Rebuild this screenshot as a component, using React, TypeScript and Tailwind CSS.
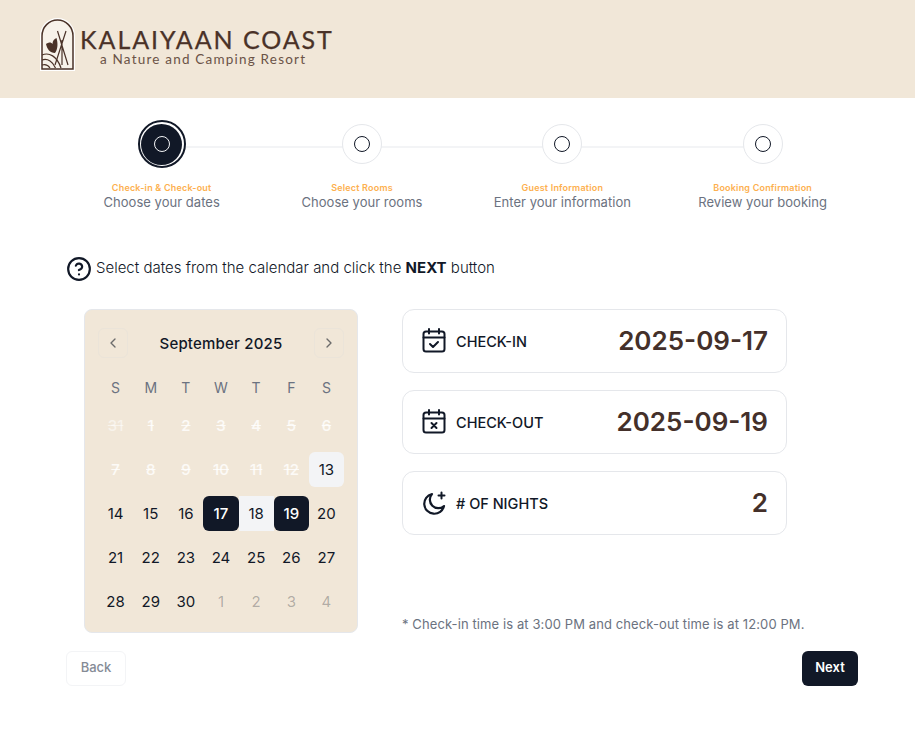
import { ChevronLeft, ChevronRight, CircleHelp } from 'lucide-react';

const steps = [
   { title: 'Check-in & Check-out', sub: 'Choose your dates', active: true },
   { title: 'Select Rooms', sub: 'Choose your rooms', active: false },
   { title: 'Guest Information', sub: 'Enter your information', active: false },
   { title: 'Booking Confirmation', sub: 'Review your booking', active: false },
];

const weekDays = ['S', 'M', 'T', 'W', 'T', 'F', 'S'];

function Logo() {
   return (
      <div className="flex items-start">
         <svg width="35" height="53" viewBox="0 0 35 53" fill="none" className="shrink-0">
            <path d="M0 53V18C0 8 7.5 0 17.5 0S35 8 35 18V53Z" fill="#ffffff" />
            <path d="M2 51V18C2 9 9 2 17.5 2S33 9 33 18V51Z" stroke="#4a3228" strokeWidth="1.5" fill="#f7f2ea" />
            <path d="M17.5 13L28 47M26 13L15 47M22 22V47" stroke="#4a3228" strokeWidth="1.2" />
            <path d="M2 37C9 34 17 38 21 50M2 42C8 40 13 44 15.5 50M2 47C5 46 8 47 10 50" stroke="#4a3228" strokeWidth="1.2" />
            <path d="M6 26C9 24 11 24 12.5 26C12.5 23 14 21 16.5 20C18 25 18 31 15 35C10 35 7 31 6 26Z" fill="#4a3228" />
         </svg>
         <div className="ml-[5px] pt-[10px] font-['Lato',sans-serif] text-[#4a3228]">
            <div className="text-[25px] leading-[22px] tracking-[1.95px] whitespace-nowrap [-webkit-text-stroke:0.25px_#4a3228]">KALAIYAAN COAST</div>
            <div className="mt-[2px] ml-[20px] text-[13.5px] leading-[14px] tracking-[1.2px] whitespace-nowrap text-[#6b5347]">a Nature and Camping Resort</div>
         </div>
      </div>
   );
}

function Step({ title, sub, active }: { title: string; sub: string; active: boolean }) {
   return (
      <div className="relative z-10 flex w-[200.33px] flex-col items-center">
         <div className="flex h-12 items-center justify-center">
            {active ? (
               <div className="flex h-12 w-12 items-center justify-center rounded-full border-[2.5px] border-[#111827] bg-white p-[1.5px]">
                  <div className="flex h-full w-full items-center justify-center rounded-full bg-[#111827]">
                     <div className="h-4 w-4 rounded-full border-[1.75px] border-[#f3f4f6]" />
                  </div>
               </div>
            ) : (
               <div className="flex h-10 w-10 items-center justify-center rounded-full border border-[#e5e7eb] bg-white">
                  <div className="h-4 w-4 rounded-full border-[1.75px] border-[#111827]" />
               </div>
            )}
         </div>
         <p className="mt-[15px] text-[9px] leading-[10px] font-semibold tracking-[0.2px] text-[#fdb04f]">{title}</p>
         <p className="text-[13px] leading-[18px] tracking-[0.03px] text-[#6b7280]">{sub}</p>
      </div>
   );
}

function Day({ label, kind }: { label: number; kind: string }) {
   const base = 'flex h-[35px] items-center justify-center pt-px text-[15px]';
   if (kind === 'disabled') {
      return <div className={`${base} font-medium text-white/80 line-through`}>{label}</div>;
   }
   if (kind === 'disabledFaint') {
      return <div className={`${base} font-medium text-white/50 line-through`}>{label}</div>;
   }
   if (kind === 'faint') {
      return <div className={`${base} text-[#111827]/30`}>{label}</div>;
   }
   if (kind === 'today') {
      return <div className={`${base} rounded-md bg-[#f3f4f6] text-[#111827]`}>{label}</div>;
   }
   if (kind === 'selected') {
      return <div className={`${base} rounded-md bg-[#111827] font-medium text-white`}>{label}</div>;
   }
   if (kind === 'range') {
      return <div className={`${base} bg-[#f3f4f6] text-[#111827]`}>{label}</div>;
   }
   return <div className={`${base} text-[#111827]`}>{label}</div>;
}

const dayRows: { label: number; kind: string }[][] = [
   [31, 1, 2, 3, 4, 5, 6].map((d) => ({ label: d, kind: d === 31 ? 'disabledFaint' : 'disabled' })),
   [7, 8, 9, 10, 11, 12].map((d) => ({ label: d, kind: 'disabled' })).concat({ label: 13, kind: 'today' }),
   [
      { label: 14, kind: 'day' },
      { label: 15, kind: 'day' },
      { label: 16, kind: 'day' },
      { label: 17, kind: 'selected' },
      { label: 18, kind: 'range' },
      { label: 19, kind: 'selected' },
      { label: 20, kind: 'day' },
   ],
   [21, 22, 23, 24, 25, 26, 27].map((d) => ({ label: d, kind: 'day' })),
   [
      { label: 28, kind: 'day' },
      { label: 29, kind: 'day' },
      { label: 30, kind: 'day' },
      { label: 1, kind: 'faint' },
      { label: 2, kind: 'faint' },
      { label: 3, kind: 'faint' },
      { label: 4, kind: 'faint' },
   ],
];

function Calendar() {
   return (
      <div className="w-[274px] rounded-lg border border-[#e5e7eb] bg-[#f1e7d8] px-[13px] pt-[18px] pb-[13px]">
         <div className="flex items-center justify-between">
            <div className="flex h-[30px] w-[30px] items-center justify-center rounded-md border border-[#ebe4d9] text-[#6b6b6b]">
               <ChevronLeft size={16} />
            </div>
            <div className="pt-[2px] text-[15px] font-medium tracking-[0.2px] text-[#111827]">September 2025</div>
            <div className="flex h-[30px] w-[30px] items-center justify-center rounded-md border border-[#ebe4d9] text-[#6b6b6b]">
               <ChevronRight size={16} />
            </div>
         </div>
         <div className="mt-[20px] grid grid-cols-7 text-center text-sm leading-[20px] text-[#6b7280]">
            {weekDays.map((d, i) => (
               <div key={i}>{d}</div>
            ))}
         </div>
         {dayRows.map((row, i) => (
            <div key={i} className={`grid grid-cols-7 ${i === 0 ? 'mt-[10px]' : 'mt-[9px]'}`}>
               {row.map((d) => (
                  <Day key={d.label + d.kind} label={d.label} kind={d.kind} />
               ))}
            </div>
         ))}
      </div>
   );
}

function CalCheckIcon() {
   return (
      <svg width="24" height="25" viewBox="0 0 24 25" fill="none" stroke="#111827" strokeWidth="2" strokeLinecap="round" strokeLinejoin="round">
         <rect x="1.5" y="3.5" width="21" height="20" rx="2.5" />
         <path d="M1.5 9.5H22.5M7 1V5.5M17 1V5.5M8 16L11 19L16 14" />
      </svg>
   );
}

function CalXIcon() {
   return (
      <svg width="24" height="25" viewBox="0 0 24 25" fill="none" stroke="#111827" strokeWidth="2" strokeLinecap="round" strokeLinejoin="round">
         <rect x="1.5" y="3.5" width="21" height="20" rx="2.5" />
         <path d="M1.5 9.5H22.5M7 1V5.5M17 1V5.5M9.5 14L14.5 19M14.5 14L9.5 19" />
      </svg>
   );
}

function MoonIcon() {
   return (
      <svg width="24" height="24" viewBox="0 0 24 24" fill="none" stroke="#111827" strokeWidth="2.2" strokeLinecap="round" strokeLinejoin="round">
         <path d="M10 3A10 10 0 1 0 22 15A8.5 8.5 0 0 1 10 3Z" />
         <path d="M19.5 1.5V7.5M16.5 4.5H22.5" strokeWidth="2" />
      </svg>
   );
}

function InfoCard({ icon, label, value }: { icon: React.ReactNode; label: string; value: string }) {
   return (
      <div className="flex h-[63.5px] items-center justify-between rounded-xl border border-[#e5e7eb] pr-[18px] pl-[19px]">
         <div className="flex items-center gap-[10px]">
            {icon}
            <span className="pt-[2px] text-[14.5px] font-medium text-[#111827]">{label}</span>
         </div>
         <span className="text-[26px] font-semibold text-[#44302a]">{value}</span>
      </div>
   );
}

export default function App() {
   return (
      <div className="min-h-[734px] bg-white font-['Inter',sans-serif]">
         <header className="flex h-[98px] items-start bg-[#f1e7d8] pt-[18px] pl-[40px]">
            <Logo />
         </header>

         <div className="relative mt-[22px] ml-[61.5px] flex w-[802px]">
            <div className="absolute top-[26px] right-[100px] left-[100px] h-[2px] bg-[#f3f4f6]" />
            {steps.map((s) => (
               <Step key={s.title} {...s} />
            ))}
         </div>

         <div className="mt-[45px] flex items-center gap-[4px] pl-[66px]">
            <CircleHelp size={26} strokeWidth={2} className="text-[#111827]" />
            <p className="pb-[2px] text-[15px] font-light text-[#111827]">
               Select dates from the calendar and click the <span className="font-bold">NEXT</span> button
            </p>
         </div>

         <div className="mt-[27px] flex pl-[84px]">
            <Calendar />
            <div className="ml-[44px] flex w-[385px] flex-col">
               <div className="flex flex-col gap-[17.5px]">
                  <InfoCard icon={<CalCheckIcon />} label="CHECK-IN" value="2025-09-17" />
                  <InfoCard icon={<CalXIcon />} label="CHECK-OUT" value="2025-09-19" />
                  <InfoCard icon={<MoonIcon />} label="# OF NIGHTS" value="2" />
               </div>
               <p className="mt-auto text-[13px] leading-[18px] tracking-[0.1px] whitespace-nowrap text-[#6b7280]">
                  * Check-in time is at 3:00 PM and check-out time is at 12:00 PM.
               </p>
            </div>
         </div>

         <div className="mt-[18px] flex w-[858px] justify-between pl-[66px]">
            <button className="h-[35px] w-[60px] rounded-md border border-[#f3f4f6] bg-white pb-[2px] text-[13px] font-medium text-[#858b96]">Back</button>
            <button className="h-[35px] w-[56px] rounded-md bg-[#111827] pb-[2px] text-[13px] font-semibold text-white">Next</button>
         </div>
      </div>
   );
}
